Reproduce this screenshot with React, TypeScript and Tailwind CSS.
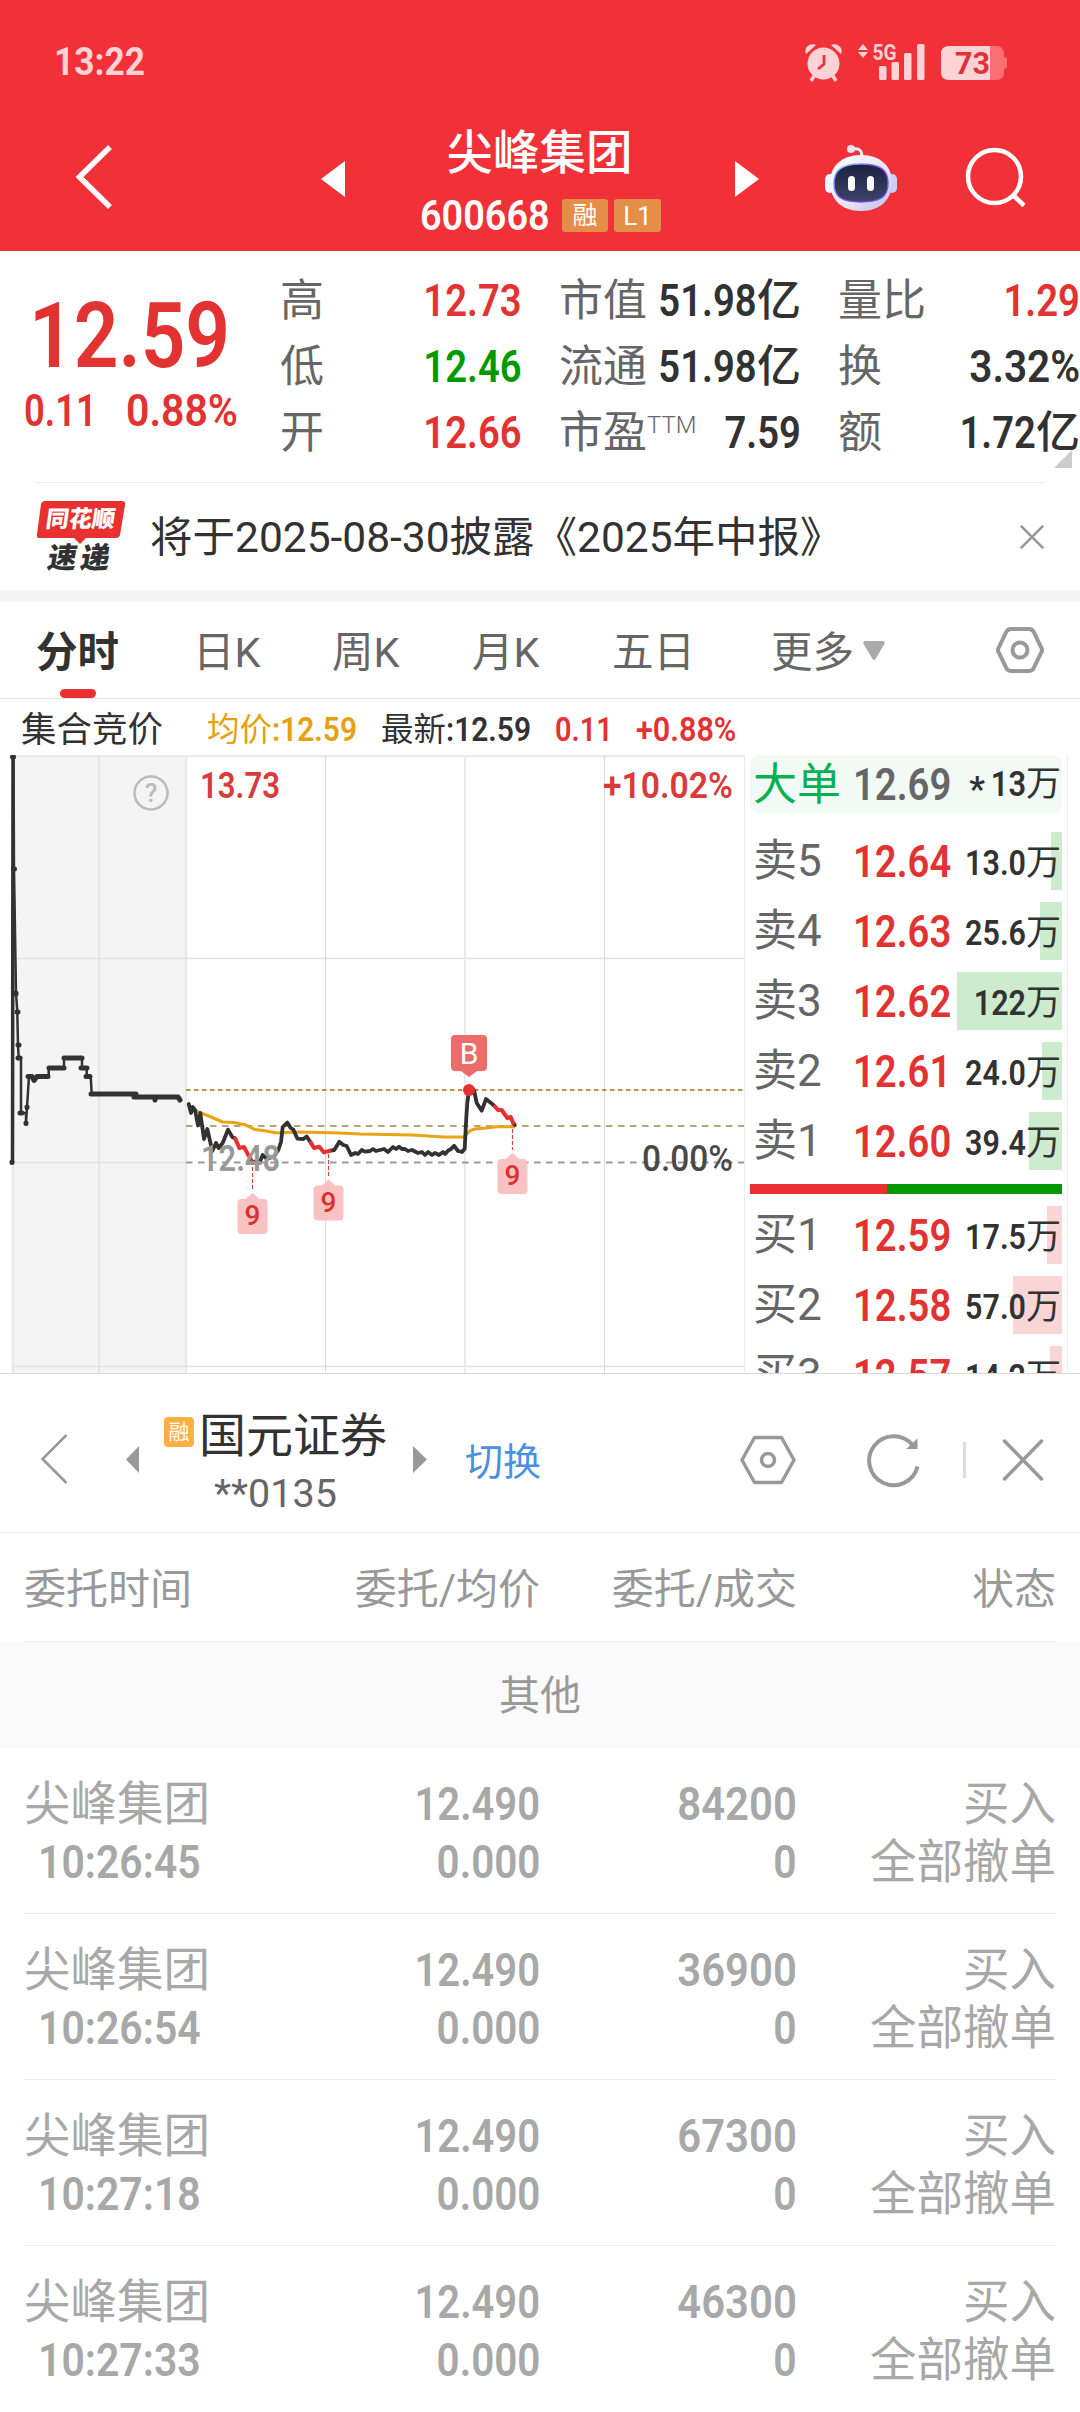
import { ReactNode } from "react";
import clsx from "clsx";

const UP = "text-[#e33232]";
const DOWN = "text-[#009900]";
const INK = "text-[#323232]";

const stats = [
  [
    { label: "高", value: "12.73", color: UP },
    { label: "低", value: "12.46", color: DOWN },
    { label: "开", value: "12.66", color: UP },
  ],
  [
    { label: "市值", value: "51.98", unit: "亿", color: INK },
    { label: "流通", value: "51.98", unit: "亿", color: INK },
    { label: "市盈", sup: "TTM", value: "7.59", color: INK },
  ],
  [
    { label: "量比", value: "1.29", color: UP },
    { label: "换", value: "3.32%", color: INK },
    { label: "额", value: "1.72", unit: "亿", color: INK },
  ],
];

const asks = [
  { label: "卖5", price: "12.64", volume: "13.0", bar: 11 },
  { label: "卖4", price: "12.63", volume: "25.6", bar: 22 },
  { label: "卖3", price: "12.62", volume: "122", bar: 105 },
  { label: "卖2", price: "12.61", volume: "24.0", bar: 20 },
  { label: "卖1", price: "12.60", volume: "39.4", bar: 33 },
];

const bids = [
  { label: "买1", price: "12.59", volume: "17.5", bar: 15 },
  { label: "买2", price: "12.58", volume: "57.0", bar: 49 },
  { label: "买3", price: "12.57", volume: "14.2", bar: 12 },
];

const orders = [
  { time: "10:26:45", amount: "84200" },
  { time: "10:26:54", amount: "36900" },
  { time: "10:27:18", amount: "67300" },
  { time: "10:27:33", amount: "46300" },
];

// narrow figures, the scale is set by the caller
const Num = ({ children, className }: { children: ReactNode; className?: string }) => (
  <span className={clsx("inline-block font-[560] whitespace-nowrap", className)}>{children}</span>
);

const StatusBar = () => (
  <div className="flex h-[104px] justify-between pt-[42px] pl-[54px] pr-[72px] text-[#ffd3d5]">
    <span className="origin-left scale-x-[.93] text-[38px] leading-[40px] font-bold">13:22</span>
    <svg width="203" height="40" viewBox="805 42 203 40" fill="currentColor">
      <path d="M806 54 C803 48 810 42 816 45 Z M841 54 C844 48 837 42 831 45 Z" />
      <circle cx="823.5" cy="63.500" r="16" />
      <path d="M814 76 l-3 5 M833 76 l3 5" stroke="currentColor" strokeWidth="3.500" />
      <path d="M824 55 v9 l-6 5" fill="none" stroke="#f23037" strokeWidth="2.800" />
      <path d="M863 44 l5 6 h-10 Z M863 58 l5 -6 h-10 Z" />
      <text x="872.500" y="60" fontSize="22" fontWeight="700" textLength="24" lengthAdjust="spacingAndGlyphs">
        5G
      </text>
      <rect x="879" y="66" width="7.500" height="14" rx="1.500" />
      <rect x="891.500" y="62" width="7.500" height="18" rx="1.500" />
      <rect x="904" y="53" width="7.500" height="27" rx="1.500" />
      <rect x="917" y="44" width="7.500" height="36" rx="1.500" />
      <path d="M990 46 h6 q8 0 8 8 v3 q3 0 3 3 v6 q0 3 -3 3 v3 q0 8 -8 8 h-6 Z" fill="#f96f74" />
      <path d="M990 46 h-41 q-8 0 -8 8 v18 q0 8 8 8 h41 Z" />
      <text x="955" y="74" fontSize="31" fontWeight="700" fill="#e03038" textLength="35" lengthAdjust="spacingAndGlyphs">
        73
      </text>
    </svg>
  </div>
);

const Robot = () => (
  <svg className="ml-[65px]" width="74" height="70" viewBox="824 141 74 70">
    <defs>
      <linearGradient id="shell" x1="0" y1="0" x2="1" y2="1">
        <stop offset="0" stopColor="#ffffff" />
        <stop offset="0.6" stopColor="#e6e4f8" />
        <stop offset="1" stopColor="#b9b9ea" />
      </linearGradient>
      <linearGradient id="rim" x1="0" y1="0" x2="1" y2="1">
        <stop offset="0" stopColor="#7fdcf0" />
        <stop offset="0.5" stopColor="#8a3df0" />
        <stop offset="1" stopColor="#6a55e0" />
      </linearGradient>
      <linearGradient id="visor" x1="0" y1="0" x2="0" y2="1">
        <stop offset="0" stopColor="#1b2343" />
        <stop offset="1" stopColor="#3b4468" />
      </linearGradient>
    </defs>
    <path d="M853 147 q9 -2 9 8" fill="none" stroke="#eceaf8" strokeWidth="3" />
    <circle cx="851" cy="147" r="4" fill="#e6e4f5" />
    <rect x="825" y="172" width="10" height="19" rx="5" fill="#f5f5ff" />
    <rect x="887" y="172" width="10" height="19" rx="5" fill="#cfcdf4" />
    <path
      d="M861 153 C881 153 892 165 892 180 C892 197 881 209 861 209 C841 209 830 197 830 180 C830 165 841 153 861 153 Z"
      fill="url(#shell)"
    />
    <path
      d="M861 162 C880 162 888 168 888 181 C888 195 880 200 861 200 C842 200 834 195 834 181 C834 168 842 162 861 162 Z"
      fill="url(#visor)"
      stroke="url(#rim)"
      strokeWidth="1.500"
    />
    <rect x="848" y="174" width="7" height="15" rx="3.500" fill="#fff" />
    <rect x="867" y="174" width="7" height="15" rx="3.500" fill="#fff" />
  </svg>
);

const Header = () => (
  <header className="h-[251px] bg-[#f23037] text-white">
    <StatusBar />
    <div className="flex h-[147px] items-center pl-[76px]">
      <svg width="38" height="68" viewBox="76 143 38 68">
        <path d="M110 146 L79.500 176 L110 206" fill="none" stroke="#fff" strokeWidth="5.500" />
      </svg>
      <svg className="mt-[3px] ml-[207px]" width="24" height="36" viewBox="0 0 24 36">
        <path d="M24 0 V36 L0 18 Z" fill="#fff" />
      </svg>
      <div className="ml-[75px] flex w-[241px] flex-col items-center">
        <h1 className="mr-[2px] text-[46.500px] leading-[62px] font-medium">尖峰集团</h1>
        <div className="mt-[14px] flex h-[36px] w-full items-center">
          <Num className="w-[130px] origin-left scale-x-[.9] text-[42px] leading-[36px]">600668</Num>
          <span className="ml-auto h-[33px] w-[46px] rounded-[3px] bg-[#e58e48] text-center text-[25px] leading-[34px]">
            融
          </span>
          <span className="ml-[6px] h-[33px] w-[47px] rounded-[3px] bg-[#e58e48] text-center text-[26px] leading-[34px]">
            L1
          </span>
        </div>
      </div>
      <svg className="mt-[3px] ml-[74px]" width="24" height="36" viewBox="0 0 24 36">
        <path d="M0 0 V36 L24 18 Z" fill="#fff" />
      </svg>
      <Robot />
      <svg className="ml-[66px]" width="64" height="64" viewBox="964 147 64 64">
        <circle cx="994.500" cy="177.500" r="26.500" fill="none" stroke="#fff" strokeWidth="4.500" />
        <path d="M1013 196 L1024 206.500" stroke="#fff" strokeWidth="4.500" />
      </svg>
    </div>
  </header>
);

const Quote = () => (
  <section className="relative flex h-[231px] pt-[17px]">
    <div className={clsx("w-[280px]", UP)}>
      <Num className="mt-[18px] ml-[29px] w-[200px] origin-left scale-x-[.86] text-[91px] leading-[100px]">12.59</Num>
      <div className="mt-[1px] flex pl-[24px] text-[45px] leading-[48px]">
        <Num className="w-[102px] origin-left scale-x-[.81]">0.11</Num>
        <Num className="origin-left scale-x-[.91]">0.88%</Num>
      </div>
    </div>
    {stats.map((column, i) => (
      <div key={i} className={clsx("w-[242px] shrink-0", i > 0 && "ml-[37px]")}>
        {column.map((item) => (
          <div key={item.label} className="flex h-[66px] items-center justify-between text-[44px] leading-[66px]">
            <span className="flex shrink-0 text-[#666]">
              {item.label}
              {"sup" in item && <sup className="top-0 mt-[-8px] text-[24px] leading-[66px] font-light">{item.sup}</sup>}
            </span>
            <span className={clsx("ml-[-20px] flex shrink-0", item.color)}>
              <Num
                className={clsx("origin-right text-[45px]", item.value.includes("%") ? "scale-x-[.9]" : "scale-x-[.85]")}
              >
                {item.value}
              </Num>
              {"unit" in item && <span className="font-medium">{item.unit}</span>}
            </span>
          </div>
        ))}
      </div>
    ))}
    <svg className="absolute right-[8px] bottom-[14px]" width="18" height="18" viewBox="0 0 18 18">
      <path d="M18 0 V18 H0 Z" fill="#ccc" />
    </svg>
  </section>
);

const Notice = () => (
  <section className="mx-[36px] flex h-[108px] items-center border-t-[1px] border-[#ececec]">
    <div className="relative h-[76px] w-[90px]">
      <svg className="absolute inset-0" width="90" height="76" viewBox="36 498 90 76">
        <path d="M45 500 H122 q4 0 3 4 L120 534 q-1 3 -4 3 H86 L80 543 L74 537 H40 q-4 0 -3 -4 L41 503 q1 -3 4 -3 Z" fill="#e93030" />
      </svg>
      <span className="absolute top-[2px] left-[10px] -skew-x-8 text-[23px] leading-[37px] font-black text-white">同花顺</span>
      <span className="absolute top-[43px] left-[12px] flex -skew-x-10 gap-[4px] text-[29px] leading-[32px] font-black text-[#323232]">
        <span>速</span>
        <span>递</span>
      </span>
    </div>
    <p className="mt-[3px] ml-[24px] text-[42.500px] leading-[60px] text-[#323232]">将于2025-08-30披露《2025年中报》</p>
    <svg className="ml-auto" width="24" height="24" viewBox="0 0 24 24">
      <path d="M1.500 1.500 L22.500 22.500 M22.500 1.500 L1.500 22.500" stroke="#999" strokeWidth="2.500" strokeLinecap="round" />
    </svg>
  </section>
);

const Tabs = () => (
  <nav className="flex h-[97px] items-center border-b-[1px] border-[#e2e2e2] text-[41.500px] leading-[60px] text-[#666]">
    <div className="relative ml-[36px] w-[157px] pt-[5px] font-bold text-[#323232]">
      分时
      <i className="absolute top-[71px] left-[24px] h-[9px] w-[36px] rounded-full bg-[#e93030]" />
    </div>
    <span className="w-[139px] pt-[5px]">日K</span>
    <span className="w-[140px] pt-[5px]">周K</span>
    <span className="w-[140px] pt-[5px]">月K</span>
    <span className="w-[159px] pt-[5px]">五日</span>
    <span className="pt-[5px]">更多</span>
    <svg className="ml-[9px]" width="22" height="19" viewBox="0 0 22 19">
      <path d="M1.500 0 H20.500 L22 2 L12.500 18 Q11 20 9.500 18 L0 2 Z" fill="#aaa" />
    </svg>
    <svg className="mr-[36px] ml-auto" width="48" height="48" viewBox="0 0 48 48" fill="none" stroke="#999" strokeWidth="4">
      <path d="M15 3 H33 Q36 3 37.500 5.500 L45 21 Q47 24 45 27 L37.500 42.500 Q36 45 33 45 H15 Q12 45 10.500 42.500 L3 27 Q1 24 3 21 L10.500 5.500 Q12 3 15 3 Z" />
      <circle cx="24" cy="24" r="7.500" />
    </svg>
  </nav>
);

const NineMark = ({ x, tip, from }: { x: number; tip: number; from: number }) => (
  <g>
    <path d={`M${x} ${from} V${tip - 3}`} stroke="#cf4545" strokeWidth="1.200" strokeDasharray="4 2" />
    <path
      d={`M${x} ${tip} l7 6 h4 q4 0 4 4 v27 q0 4 -4 4 h-22 q-4 0 -4 -4 v-27 q0 -4 4 -4 h4 Z`}
      fill="#f8c2c2"
    />
    <text x={x} y={tip + 32} fontSize="28" fontWeight="500" fill="#d93030" textAnchor="middle">
      9
    </text>
  </g>
);

const Chart = () => (
  <svg className="shrink-0" width="744" height="618" viewBox="0 755 744 618" fill="none">
    <rect x="13" y="755" width="173" height="618" fill="#f4f4f4" />
    <path d="M12 756 H744 M186 755 V1373 M13 1162 V1373" stroke="#e9e9e9" strokeWidth="2.500" />
    <path d="M12 958.500 H744 M13 1162.500 H186 M12 1366.500 H744 M99 755 V1373" stroke="#e2e2e2" strokeWidth="1.500" />
    <path d="M325.500 755 V1373 M604.500 755 V1373" stroke="#dadada" />
    <path d="M465 755 V1373" stroke="#ebebeb" strokeWidth="2" />

    <text x="200" y="798" fontSize="36" fontWeight="560" fill="#d93a3a" textLength="80" lengthAdjust="spacingAndGlyphs">
      13.73
    </text>
    <text x="603" y="798" fontSize="36" fontWeight="560" fill="#d93a3a" textLength="130" lengthAdjust="spacingAndGlyphs">
      +10.02%
    </text>
    <circle cx="151" cy="793" r="16.500" stroke="#bbb" strokeWidth="2.500" />
    <text x="151" y="802" fontSize="26" fill="#bbb" fontWeight="500" textAnchor="middle">
      ?
    </text>

    <path d="M186 1090 H744" stroke="#c78f45" strokeWidth="2" strokeDasharray="4.500 3.500" />
    <path d="M186 1126 H744" stroke="#b9a273" strokeWidth="2" strokeDasharray="6.500 5.500" />
    <path d="M186 1162.500 H744" stroke="#999" strokeWidth="1.800" strokeDasharray="6.500 5.500" />

    <path
      d="M191 1108 L200 1112.500 L211 1117 L222.700 1122 L234 1122.500 L245 1124.700 L255 1129.600 L266 1131 L276.700 1133 L300 1132 L320 1132.500 L340 1133 L360 1134 L413 1135 L443 1137 L464 1137 L470 1130.700 L475 1129 L486 1128 L497 1126.700 L515 1126.700"
      stroke="#e8a317"
      strokeWidth="3"
      strokeLinejoin="round"
    />
    <g stroke="#323232" strokeLinejoin="round" strokeLinecap="round">
      <path d="M13 757 L12.500 1162" strokeWidth="3.500" />
      <path
        d="M13.500 757 L14 869 L16 993 L17.300 1012 L18 1045 L18.700 1058 H21 V1113 H26 V1123 L27 1107 L29 1076.500 H32 L34 1080.500 L37 1076.500 H48.700 V1068 H64 V1058 H82 V1068 H86.700 V1076.500 H90.700 L91.700 1094 H136 V1097 H178 L180 1100"
        strokeWidth="2.500"
      />
      <path
        d="M12.500 757 h1 M13.500 869 h1 M16 993 v1 M17 1012 h1 M18 1045 h1 M18 1058 h2 M20 1113 h2 M26 1123 v.5 M27 1107 v.5 M28 1076.500 h4 l2 4 3 -4 h11 M49 1068 h15 M64 1058 h18 M81 1068 h6 M86 1076.500 h4 M91 1094 h45 M134 1097 h44 l2 3 M155 1099 v1 M12 1162 v.5"
        strokeWidth="5"
      />
      <path
        d="M188.700 1104 L191 1113 L192.700 1107 L195 1110 L198 1125.500 L200.300 1113 L204 1139 L207.300 1129 L212.300 1151 L216 1143 L218.700 1148 L222.700 1143 L228 1129.600 L232.300 1137 L235.300 1138.600"
        strokeWidth="3.800"
      />
      <path
        d="M252.300 1162 L260 1161.500 L262.700 1155 L266.700 1159 L274 1156.500 L278.300 1150 L281 1142 L282.700 1127 L287.300 1122.600 L290.700 1128 L293.300 1129.600 L297.300 1138.600 L303.300 1139 L306.700 1136.500 L310.700 1142.600"
        strokeWidth="3.800"
      />
      <path
        d="M329.300 1150.800 L334.300 1150 L339.300 1141.800 L343.300 1145 L346.700 1146 L351 1155 L355.300 1153 L358 1154 L361.700 1150 L365 1151.600 L370 1151 L373 1149 L376 1151 L380 1150 L384 1149 L388 1152 L393 1147 L396 1149 L399 1146.700 L402 1149 L405 1149 L408 1151 L412 1150 L418 1153 L422 1152 L425 1155 L428 1152 L432 1155 L435 1153 L439 1155 L443 1152 L445 1154 L448 1150.700 L451 1149 L454 1145.700 L458 1151 L462 1152 L464.700 1148.700 L466 1123 L467.300 1103 L469 1090 H474 L476.700 1103 L481.700 1110.700 L486 1099 L490.700 1102.700 L495 1106.700"
        strokeWidth="3.800"
      />
      <path d="M513 1122.700 L514.700 1124.700" strokeWidth="3.800" />
    </g>
    <path
      d="M235.300 1138.600 L239.300 1148 L244 1147 L248.300 1155 L252.300 1162 M310.700 1142.600 L314 1148 L319.300 1146.700 L324 1152.400 L329.300 1150.800 M495 1106.700 L498 1110 L501.700 1110 L507.300 1118 L510.700 1117 L513 1122.700"
      stroke="#e93030"
      strokeWidth="4"
      strokeLinejoin="round"
      strokeLinecap="round"
    />

    <text x="201" y="1171" fontSize="36" fontWeight="560" fill="#999" textLength="79" lengthAdjust="spacingAndGlyphs">
      12.48
    </text>
    <text x="642" y="1171" fontSize="36" fontWeight="500" fill="#484848" textLength="91" lengthAdjust="spacingAndGlyphs">
      0.00%
    </text>

    <path d="M455 1035 h28 q4 0 4 4 v28 q0 4 -4 4 h-6 l-8 6 l-8 -6 h-6 q-4 0 -4 -4 v-28 q0 -4 4 -4 Z" fill="#ee6b6b" />
    <text x="469" y="1064" fontSize="30" fill="#fff" textAnchor="middle">
      B
    </text>
    <circle cx="469" cy="1090" r="6" fill="#e93030" />
    <NineMark x={252.500} tip={1193} from={1167} />
    <NineMark x={328.500} tip={1179.500} from={1154} />
    <NineMark x={512.500} tip={1153} from={1129} />
  </svg>
);

const Level = ({ label, price, volume, bar, side }: (typeof asks)[number] & { side: "ask" | "bid" }) => (
  <div className="relative mb-[12px] flex h-[58px] shrink-0 items-center pl-[3px] leading-[58px]">
    <i
      className={clsx("absolute top-0 right-0 h-full", side === "ask" ? "bg-[#cdebcd]" : "bg-[#f9d5d5]")}
      style={{ width: bar }}
    />
    <span className="relative w-[100px] shrink-0 text-[44px] text-[#666]">{label}</span>
    <Num className={clsx("relative w-[95px] shrink-0 origin-left scale-x-[.85] pt-[1px] text-[45px]", UP)}>{price}</Num>
    <span className="relative mt-[5px] mr-[1px] ml-auto flex text-[35px] text-[#323232]">
      <Num className="origin-right scale-x-[.87]">{volume}</Num>万
    </span>
  </div>
);

const OrderBook = () => (
  <div className="flex h-[619px] w-[324px] flex-col border-x-[1px] border-t-[1px] border-[#ececec] px-[5px]">
    <div className="mb-[18px] flex h-[59px] shrink-0 items-center rounded-[10px] bg-[#f1faf5] pl-[3px] leading-[58px]">
      <span className="w-[100px] shrink-0 text-[44px] text-[#0ab050]">大单</span>
      <Num className="w-[95px] shrink-0 origin-left scale-x-[.85] text-[45px] text-[#666]">12.69</Num>
      <span className="mt-[5px] mr-[1px] ml-auto flex text-[35px] text-[#323232]">
        <Num className="mr-[1px] pt-[5px]">*</Num>
        <Num className="origin-right scale-x-[.88]">13</Num>万
      </span>
    </div>
    {asks.map((level) => (
      <Level key={level.label} side="ask" {...level} />
    ))}
    <div className="mt-[2px] mb-[12px] flex h-[10px] shrink-0">
      <div className="w-[137px] bg-[#e93030]" />
      <div className="flex-1 bg-[#009900]" />
    </div>
    {bids.map((level) => (
      <Level key={level.label} side="bid" {...level} />
    ))}
  </div>
);

const Market = () => (
  <section>
    <div className="flex h-[56px] items-center pt-[5px] text-[32.500px] leading-[50px]">
      <span className="ml-[21px] w-[186px] text-[35.500px] text-[#323232]">集合竞价</span>
      <span className="w-[174px] whitespace-nowrap text-[#e6a010]">
        均价
        <Num className="origin-left scale-x-[.92]">:12.59</Num>
      </span>
      <span className="w-[174px] whitespace-nowrap text-[#323232]">
        最新
        <Num className="origin-left scale-x-[.92]">:12.59</Num>
      </span>
      <Num className={clsx("w-[81px] origin-left scale-x-[.89]", UP)}>0.11</Num>
      <Num className={clsx("origin-left scale-x-[.94]", UP)}>+0.88%</Num>
    </div>
    <div className="flex h-[619px] items-end overflow-hidden border-b-[1px] border-[#d8d8d8]">
      <Chart />
      <OrderBook />
    </div>
  </section>
);

const Account = () => (
  <section className="flex h-[159px] items-center border-b-[1px] border-[#ececec] pt-[13px]">
    <svg className="mb-[2px] ml-[40px]" width="28" height="50" viewBox="40 1433 28 50">
      <path d="M66.500 1434 L42.500 1458 L66.500 1482" fill="none" stroke="#999" strokeWidth="2.500" />
    </svg>
    <svg className="ml-[58px]" width="13" height="27" viewBox="0 0 13 27">
      <path d="M13 0 V27 L0 13.500 Z" fill="#999" />
    </svg>
    <div className="mt-[9px] ml-[25px] flex w-[226px] flex-col items-center">
      <div className="flex h-[60px] w-full">
        <span className="mt-[11px] h-[30px] w-[30px] rounded-[4px] bg-[#fdb042] text-center text-[21px] leading-[31px] text-white">融</span>
        <span className="ml-[5px] text-[47px] leading-[60px] whitespace-nowrap text-[#323232]">国元证券</span>
      </div>
      <span className="mr-[3px] text-[39.500px] leading-[56px] text-[#666]">**0135</span>
    </div>
    <svg className="ml-[23px]" width="14" height="27" viewBox="0 0 14 27">
      <path d="M0 0 V27 L14 13.500 Z" fill="#999" />
    </svg>
    <span className="mt-[4px] ml-[38px] text-[38px] leading-[60px] text-[#4a90e2]">切换</span>
    <svg className="ml-auto" width="56" height="52" viewBox="740 1434 56 52" fill="none" stroke="#999">
      <path d="M754.500 1437.500 H781.500 L794 1460 L781.500 1482.500 H754.500 L742 1460 Z" strokeWidth="3.500" strokeLinejoin="round" />
      <circle cx="768" cy="1460" r="6.500" strokeWidth="3.500" />
    </svg>
    <svg className="ml-[70px]" width="56" height="56" viewBox="866 1432 56 56">
      <path d="M912.500 1445 A24.500 24.500 0 1 0 917.500 1466.500" fill="none" stroke="#999" strokeWidth="4" />
      <path d="M917.500 1438.500 V1449 H906 Z" fill="#999" />
    </svg>
    <i className="ml-[41px] h-[36px] w-[3px] bg-[#dcdcdc]" />
    <svg className="mr-[36px] ml-[36px]" width="42" height="42" viewBox="0 0 42 42">
      <path d="M2.500 2 L39.500 40 M39.500 2 L2.500 40" stroke="#999" strokeWidth="3.500" strokeLinecap="round" />
    </svg>
  </section>
);

const COLUMNS = "grid grid-cols-[200px_316px_257px_1fr]";

const OrderList = () => (
  <section>
    <div className={clsx(COLUMNS, "mx-[24px] h-[109px] border-b-[1px] border-[#ececec] text-[42px] leading-[114px] text-[#999]")}>
      <span>委托时间</span>
      <span className="text-right">委托/均价</span>
      <span className="text-right">委托/成交</span>
      <span className="text-right">状态</span>
    </div>
    <div className="h-[106px] bg-[#fafafa] text-center text-[41px] leading-[109px] text-[#999]">其他</div>
    {orders.map((order) => (
      <div
        key={order.time}
        className={clsx(
          COLUMNS,
          "mx-[24px] h-[166px] border-b-[1px] border-[#ececec] pt-[27px] text-[46.500px] leading-[58px] text-[#a8a8a8] last:border-b-0",
        )}
      >
        <div className="flex w-[186px] flex-col items-center whitespace-nowrap">
          <span>尖峰集团</span>
          <Num className="ml-[5px] scale-x-[.88]">{order.time}</Num>
        </div>
        <div className="flex flex-col items-end">
          <Num className="origin-right scale-x-[.86]">12.490</Num>
          <Num className="origin-right scale-x-[.87]">0.000</Num>
        </div>
        <div className="flex flex-col items-end">
          <Num className="origin-right scale-x-[.9]">{order.amount}</Num>
          <Num className="origin-right scale-x-[.88]">0</Num>
        </div>
        <div className="flex flex-col items-end">
          <span>买入</span>
          <span>全部撤单</span>
        </div>
      </div>
    ))}
  </section>
);

export default function App() {
  return (
    <div className="h-[2412px] w-[1080px] overflow-hidden bg-white font-[Roboto,'Noto_Sans_CJK_SC',sans-serif]">
      <Header />
      <Quote />
      <Notice />
      <div className="h-[12px] bg-[#f4f4f4]" />
      <Tabs />
      <Market />
      <Account />
      <OrderList />
    </div>
  );
}
